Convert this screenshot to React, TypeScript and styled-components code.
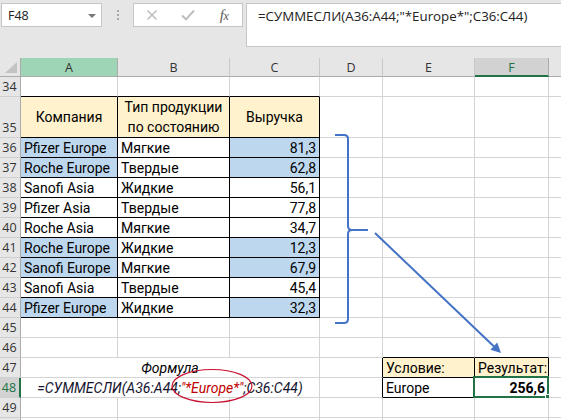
import React from 'react';
import styled, { createGlobalStyle } from 'styled-components';

const GlobalStyle = createGlobalStyle`
  html, body { margin: 0; padding: 0; background: #fff; }
  body { width: 561px; height: 420px; overflow: hidden; font-family: "Open Sans", "Noto Sans", sans-serif; }
  *, *::before, *::after { box-sizing: border-box; }
`;

const Page = styled.div`
  position: relative;
  width: 561px;
  height: 420px;
  overflow: hidden;
  background: #fff;
`;

const Toolbar = styled.div`
  height: 58px;
  background: #e6e6e6;
  display: flex;
  align-items: flex-start;
  padding: 3px 0 0 1px;
`;

const NameBox = styled.div`
  width: 101px;
  height: 24px;
  background: #fff;
  border: 1px solid #c6c6c6;
  display: flex;
  align-items: center;
  justify-content: space-between;
  padding: 0 5px 0 6px;
  font-family: "Open Sans", sans-serif;
  font-size: 12.5px;
  color: #222;
`;

const DropArrow = styled.span`
  width: 0;
  height: 0;
  border-left: 4px solid transparent;
  border-right: 4px solid transparent;
  border-top: 4px solid #777;
  margin-top: 1px;
`;

const Grip = styled.div`
  width: 31px;
  height: 24px;
  display: flex;
  flex-direction: column;
  align-items: center;
  justify-content: center;
  gap: 2px;
`;

const GripDot = styled.span`
  width: 2px;
  height: 2px;
  background: #a8a8a8;
`;

const ButtonsBox = styled.div`
  width: 110px;
  height: 24px;
  background: #fff;
  border: 1px solid #c6c6c6;
  display: flex;
  align-items: center;
`;

const ToolButton = styled.div`
  width: 36px;
  height: 22px;
  display: flex;
  align-items: center;
  justify-content: center;
`;

const Fx = styled.span`
  font-family: "Liberation Serif", "DejaVu Serif", serif;
  font-style: italic;
  color: #5a5a5a;
  font-size: 15px;
  line-height: 1;
  letter-spacing: -0.5px;
  & > small { font-size: 12px; }
`;

const FormulaBox = styled.div`
  flex: 1;
  margin-left: 3px;
  margin-right: -2px;
  height: 44px;
  background: #fff;
  border: 1px solid #c6c6c6;
  padding: 2px 0 0 11px;
  font-family: "Open Sans", sans-serif;
  font-size: 13.3px;
  line-height: 20px;
  color: #222;
  white-space: nowrap;
`;

const Sheet = styled.div`
  display: grid;
  grid-template-columns: 21px 97px 112px 90px 63px 92px 74px 64px;
  grid-template-rows: 19px 20px 41px repeat(15, 20px);
`;

const Corner = styled.div`
  background: #e6e6e6;
  border-right: 1px solid #ababab;
  border-bottom: 1px solid #ababab;
  display: flex;
  align-items: flex-end;
  justify-content: flex-end;
  padding: 0 3px 3px 0;
`;

const ColHeader = styled.div<{ $state?: 'mark' | 'active' }>`
  background: ${p => (p.$state === 'mark' ? '#9fd5b7' : p.$state === 'active' ? '#d2d2d2' : '#e6e6e6')};
  border-right: 1px solid ${p => (p.$state ? '#ababab' : '#c8c8c8')};
  border-bottom: ${p => (p.$state === 'active' ? '2px solid #217346' : '1px solid #ababab')};
  display: flex;
  align-items: center;
  justify-content: center;
  font-family: "Open Sans", sans-serif;
  font-size: 12.5px;
  color: ${p => (p.$state === 'active' ? '#217346' : '#333')};
  padding-top: ${p => (p.$state === 'active' ? '1px' : '0')};
`;

const RowHeader = styled.div<{ $active?: boolean }>`
  background: ${p => (p.$active ? '#d2d2d2' : '#e6e6e6')};
  border-right: ${p => (p.$active ? '2px solid #217346' : '1px solid #ababab')};
  border-bottom: 1px solid #cfcfcf;
  display: flex;
  align-items: flex-end;
  justify-content: center;
  font-family: "Open Sans", sans-serif;
  font-size: 12.5px;
  line-height: 18px;
  color: ${p => (p.$active ? '#217346' : '#333')};
  padding-right: 1px;
`;

type Align = 'left' | 'center' | 'right';

const Cell = styled.div<{
  $fill?: string;
  $align: Align;
  $bold?: boolean;
  $italic?: boolean;
  $span: number;
  $rb?: boolean;
  $bb?: boolean;
}>`
  position: relative;
  grid-column: span ${p => p.$span};
  display: flex;
  flex-direction: column;
  justify-content: center;
  align-items: ${p => (p.$align === 'right' ? 'flex-end' : p.$align === 'center' ? 'center' : 'flex-start')};
  text-align: ${p => p.$align};
  padding: 0 3px 0 3px;
  background: ${p => p.$fill ?? '#fff'};
  border-right: 1px solid ${p => (p.$rb ? '#000' : '#d4d4d4')};
  border-bottom: 1px solid ${p => (p.$bb ? '#000' : '#d4d4d4')};
  font-family: Roboto, "Open Sans", sans-serif;
  font-size: 14px;
  font-weight: ${p => (p.$bold ? 700 : 400)};
  font-style: ${p => (p.$italic ? 'italic' : 'normal')};
  color: #000;
  white-space: nowrap;
  line-height: 20px;
`;

const Selection = styled.div`
  position: absolute;
  top: -2px;
  left: -2px;
  right: -1px;
  bottom: -1px;
  border: 2px solid #217346;
  pointer-events: none;
`;

const FillHandle = styled.div`
  position: absolute;
  right: -4px;
  bottom: -4px;
  width: 6px;
  height: 6px;
  background: #217346;
  border: 1px solid #fff;
`;

const FormulaText = styled.span`
  color: #14142e;
`;

const Crit = styled.span`
  color: #c00000;
`;

const Overlay = styled.svg`
  position: absolute;
  left: 0;
  top: 0;
  pointer-events: none;
`;

type Spec = {
  content?: React.ReactNode;
  fill?: string;
  align?: Align;
  bold?: boolean;
  italic?: boolean;
  span?: number;
  rb?: boolean;
  bb?: boolean;
  selected?: boolean;
};

type RowSpec = { num: number; label?: string; active?: boolean; cells: Spec[] };

const YELLOW = '#fff2cc';
const BLUE = '#bdd7ee';

const empty = (n: number): Spec[] => Array.from({ length: n }, () => ({}));

const data: [string, string, string, boolean][] = [
  ['Pfizer Europe', 'Мягкие', '81,3', true],
  ['Roche Europe', 'Твердые', '62,8', true],
  ['Sanofi Asia', 'Жидкие', '56,1', false],
  ['Pfizer Asia', 'Твердые', '77,8', false],
  ['Roche Asia', 'Мягкие', '34,7', false],
  ['Roche Europe', 'Жидкие', '12,3', true],
  ['Sanofi Europe', 'Мягкие', '67,9', true],
  ['Sanofi Asia', 'Твердые', '45,4', false],
  ['Pfizer Europe', 'Жидкие', '32,3', true],
];

const rows: RowSpec[] = [
  { num: 34, cells: [{ bb: true }, { bb: true }, { bb: true }, ...empty(4)] },
  {
    num: 35,
    cells: [
      { content: 'Компания', fill: YELLOW, align: 'center', rb: true, bb: true },
      {
        content: (
          <>
            <span>Тип продукции</span>
            <span>по состоянию</span>
          </>
        ),
        fill: YELLOW,
        align: 'center',
        rb: true,
        bb: true,
      },
      { content: 'Выручка', fill: YELLOW, align: 'center', rb: true, bb: true },
      ...empty(4),
    ],
  },
  ...data.map(([a, b, c, eu], i) => ({
    num: 36 + i,
    cells: [
      { content: a, fill: eu ? BLUE : undefined, rb: true, bb: true },
      { content: b, rb: true, bb: true },
      { content: c, fill: eu ? BLUE : undefined, align: 'right' as Align, rb: true, bb: true },
      ...empty(4),
    ],
  })),
  { num: 45, cells: empty(7) },
  { num: 46, cells: [...empty(4), { bb: true }, { bb: true }, {}] },
  {
    num: 47,
    cells: [
      { content: 'Формула', italic: true, align: 'center', span: 3 },
      { rb: true },
      { content: 'Условие:', fill: YELLOW, rb: true, bb: true },
      { content: 'Результат:', fill: YELLOW, rb: true, bb: true },
      {},
    ],
  },
  {
    num: 48,
    active: true,
    cells: [
      {
        content: (
          <FormulaText>
            =СУММЕСЛИ(A36:A44;<Crit>"*Europe*"</Crit>;C36:C44)
          </FormulaText>
        ),
        italic: true,
        align: 'center',
        span: 3,
      },
      { rb: true },
      { content: 'Europe', rb: true, bb: true },
      { content: '256,6', bold: true, align: 'right', rb: true, bb: true, selected: true },
      {},
    ],
  },
  { num: 49, cells: empty(7) },
  { num: 50, label: '', cells: empty(7) },
];

const COLS = ['A', 'B', 'C', 'D', 'E', 'F', ''];

export default function App() {
  return (
    <Page>
      <GlobalStyle />
      <Toolbar>
        <NameBox>
          <span>F48</span>
          <DropArrow />
        </NameBox>
        <Grip>
          <GripDot />
          <GripDot />
          <GripDot />
        </Grip>
        <ButtonsBox>
          <ToolButton>
            <svg width="12" height="12" viewBox="0 0 12 12">
              <path d="M1.5 1.5 L10.5 10.5 M10.5 1.5 L1.5 10.5" stroke="#bdbdbd" strokeWidth="1.5" fill="none" />
            </svg>
          </ToolButton>
          <ToolButton>
            <svg width="14" height="12" viewBox="0 0 14 12">
              <path d="M1 6.5 L5 10.3 L13 1.5" stroke="#bdbdbd" strokeWidth="2" fill="none" />
            </svg>
          </ToolButton>
          <ToolButton>
            <Fx>
              f<small>x</small>
            </Fx>
          </ToolButton>
        </ButtonsBox>
        <FormulaBox>=СУММЕСЛИ(A36:A44;"*Europe*";C36:C44)</FormulaBox>
      </Toolbar>
      <Sheet>
        <Corner>
          <svg width="12" height="11" viewBox="0 0 12 11">
            <path d="M12 0 L12 11 L0 11 Z" fill="#c3c3c3" />
          </svg>
        </Corner>
        {COLS.map((c, i) => (
          <ColHeader key={i} $state={c === 'A' ? 'mark' : c === 'F' ? 'active' : undefined}>
            {c}
          </ColHeader>
        ))}
        {rows.map(r => (
          <React.Fragment key={r.num}>
            <RowHeader $active={r.active}>{r.label ?? r.num}</RowHeader>
            {r.cells.map((s, i) => (
              <Cell
                key={i}
                $fill={s.fill}
                $align={s.align ?? 'left'}
                $bold={s.bold}
                $italic={s.italic}
                $span={s.span ?? 1}
                $rb={s.rb}
                $bb={s.bb}
              >
                {s.content}
                {s.selected && (
                  <Selection>
                    <FillHandle />
                  </Selection>
                )}
              </Cell>
            ))}
          </React.Fragment>
        ))}
      </Sheet>
      <Overlay width="561" height="420" viewBox="0 0 561 420">
        <path
          d="M335 135 L344 135 Q348 135 348 139 L348 226 Q348 230 352 230 L368 230 M352 230 Q348 230 348 234 L348 319 Q348 323 344 323 L335 323"
          stroke="#4472c4"
          strokeWidth="2"
          fill="none"
        />
        <line x1="375" y1="233" x2="494" y2="346.5" stroke="#4472c4" strokeWidth="2" />
        <polygon points="501,353 490.4,349.7 497.2,342.5" fill="#4472c4" />
        <ellipse cx="212" cy="386" rx="40" ry="16.5" stroke="#c8102e" strokeWidth="1.2" fill="none" />
      </Overlay>
    </Page>
  );
}
